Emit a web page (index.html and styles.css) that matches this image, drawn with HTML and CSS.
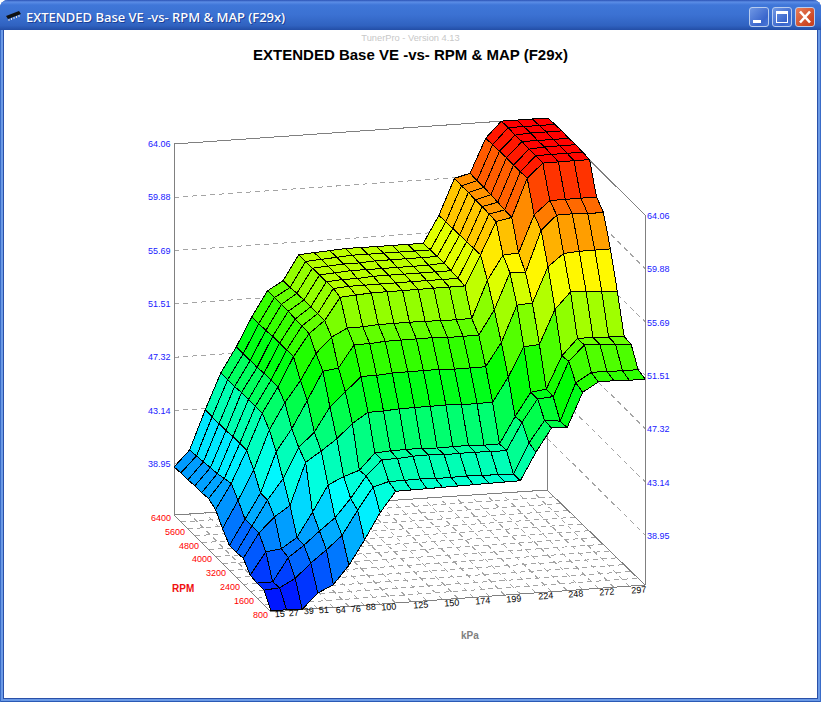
FILE: index.html
```html
<!DOCTYPE html>
<html lang="en">

<head>
    <meta charset="UTF-8">
    <title>EXTENDED Base VE -vs- RPM &amp; MAP (F29x)</title>
    <link rel="stylesheet" href="styles.css">
</head>

<body>
    <div class="window">
        <div class="titlebar">
            <svg class="app-icon" width="17" height="11" viewBox="0 0 17 11">
                <polygon points="1,5 14,0 16,3 3,8" fill="#111" />
                <path d="M4 8v2M6.500 7v2M9 6v2M11.500 5v2M14 4v2" stroke="#ddd" stroke-width="1" />
            </svg>
            <div class="window-title">EXTENDED Base VE -vs- RPM &amp; MAP (F29x)</div>
            <div class="window-buttons">
                <div class="win-btn">
                    <svg width="18" height="18" viewBox="0 0 18 18">
                        <rect x="3" y="12" width="8" height="3" fill="#fff" />
                    </svg>
                </div>
                <div class="win-btn">
                    <svg width="18" height="18" viewBox="0 0 18 18">
                        <rect x="3.500" y="3.500" width="11" height="11" fill="none" stroke="#fff" />
                        <rect x="3" y="3" width="12" height="3" fill="#fff" />
                    </svg>
                </div>
                <div class="win-btn close">
                    <svg width="18" height="18" viewBox="0 0 18 18">
                        <path d="M4 3.500L14 14.500M14 3.500L4 14.500" stroke="#fff" stroke-width="2.600" />
                    </svg>
                </div>
            </div>
        </div>

        <div class="client">
            <div class="version">TunerPro - Version 4.13</div>
            <h1 class="chart-title">EXTENDED Base VE -vs- RPM &amp; MAP (F29x)</h1>
            <svg id="chart" class="chart" viewBox="4 70 813 628"></svg>
        </div>
    </div>

    <script src="chart.js"></script>
</body>

</html>
```

FILE: styles.css
```css
html,
body {
    margin: 0;
    padding: 0;
    background-color: #fff;
}

.window {
    width: 821px;
    height: 702px;
    box-sizing: border-box;
    padding: 0 3px 3px;
    display: flex;
    flex-direction: column;
    background-color: #6b9ae6;
    border-radius: 8px 8px 0 0;
    box-shadow: inset 1px 0 #3a6cc8, inset -1px 0 #3a6cc8, inset 0 -1px #2a5ab5;
}

.titlebar {
    height: 30px;
    margin: 0 -3px;
    padding: 2px 6px 0 5px;
    box-sizing: border-box;
    display: flex;
    align-items: center;
    flex-shrink: 0;
    border-radius: 8px 8px 0 0;
    background: linear-gradient(180deg, #2a52b4 0, #5b8de6 2px, #3f76d8 5px, #3b71d2 50%, #3062c0 85%, #234ea6 100%);
}

.app-icon {
    margin-top: 1px;
    flex-shrink: 0;
}

.window-title {
    margin-left: 4px;
    margin-top: 1px;
    flex: 1;
    font-family: "Noto Sans", sans-serif;
    font-size: 13px;
    font-weight: 500;
    color: #fff;
    white-space: nowrap;
    text-shadow: 1px 1px #1c3f96;
}

.window-buttons {
    display: flex;
    gap: 3px;
    margin-top: 2px;
}

.win-btn {
    width: 20px;
    height: 20px;
    box-sizing: border-box;
    border: 1px solid #b8ccee;
    border-radius: 3px;
    background: linear-gradient(135deg, #6f97e4, #3a66cc 70%, #4a78d8);
}

.win-btn svg {
    display: block;
}

.win-btn.close {
    background: linear-gradient(135deg, #e8805c, #cf4a26 70%, #c63f1e);
}

.client {
    flex: 1;
    display: flex;
    flex-direction: column;
    background-color: #fff;
    border: 1px solid #2a50a8;
    border-top: none;
    margin: 0;
    min-height: 0;
    overflow: hidden;
}

.version {
    height: 13px;
    margin-top: 2px;
    text-align: center;
    font-family: "Liberation Sans", sans-serif;
    font-size: 9.300px;
    line-height: 13px;
    color: #c8c8c8;
}

.chart-title {
    height: 25px;
    margin: 0;
    text-align: center;
    font-family: "Liberation Sans", sans-serif;
    font-size: 15px;
    font-weight: bold;
    line-height: 20px;
    color: #000;
}

.chart {
    display: block;
    flex: 1;
    width: 813px;
    min-height: 0;
    margin-left: -1px;
}

.chart text {
    font-family: "Liberation Sans", sans-serif;
    font-size: 9px;
}

.chart .wall {
    stroke: #808080;
    stroke-width: 1;
    fill: none;
    shape-rendering: crispEdges;
}

.chart .grid {
    stroke: #a4a4a4;
    stroke-width: 1;
    stroke-dasharray: 5 4;
    fill: none;
    shape-rendering: crispEdges;
}

.chart .cell {
    stroke: #000;
    stroke-width: 1;
    stroke-linejoin: round;
    shape-rendering: crispEdges;
}

.chart .value-tick {
    fill: #2020ff;
}

.chart .rpm-tick {
    fill: #ff0000;
    text-anchor: end;
}

.chart .kpa-tick {
    fill: #000;
    text-anchor: middle;
}

.chart .axis-title {
    font-size: 10px;
    font-weight: bold;
}

.chart .rpm-title {
    fill: #f01010;
}

.chart .kpa-title {
    fill: #808080;
}
```

FILE: chart.js
```js
const SVG_NS = 'http://www.w3.org/2000/svg';
const chart = document.getElementById('chart');

// Surface height above the floor in pixels, one line per RPM row (800 to 6400, step 400)
const heights = [
    [1, 1, 0, 15, 22, 40, 64, 90, 110, 110, 110, 110, 110, 110, 110, 110, 110, 137, 160, 159, 193, 202, 202, 201, 201],
    [15, 16, 24, 38, 50, 63, 87, 109, 113, 113, 113, 112, 112, 112, 111, 111, 110, 140, 161, 159, 196, 205, 205, 204, 204],
    [15, 15, 38, 49, 62, 74, 92, 113, 128, 128, 129, 129, 128, 128, 128, 127, 127, 154, 176, 177, 211, 226, 225, 224, 223],
    [16, 38, 40, 50, 74, 100, 107, 112, 128, 129, 129, 129, 128, 128, 128, 127, 127, 153, 176, 178, 210, 226, 226, 225, 224],
    [26, 50, 65, 75, 117, 127, 138, 152, 162, 162, 163, 163, 163, 163, 162, 162, 162, 186, 215, 216, 250, 266, 265, 264, 263],
    [25, 50, 75, 95, 125, 139, 163, 177, 191, 191, 192, 192, 192, 192, 191, 191, 191, 214, 250, 251, 286, 298, 299, 299, 299],
    [25, 50, 75, 115, 137, 164, 192, 194, 216, 216, 217, 217, 217, 217, 216, 216, 216, 240, 276, 275, 316, 330, 330, 329, 329],
    [35, 62, 91, 130, 156, 177, 203, 218, 226, 226, 227, 227, 227, 227, 226, 226, 226, 263, 287, 288, 325, 338, 338, 338, 338],
    [47, 72, 104, 140, 165, 194, 216, 228, 250, 251, 252, 252, 252, 252, 252, 252, 252, 282, 314, 317, 355, 369, 369, 369, 369],
    [51, 70, 104, 140, 165, 194, 217, 228, 252, 253, 253, 253, 253, 253, 253, 253, 253, 282, 315, 318, 355, 370, 370, 370, 370],
    [50, 68, 104, 140, 165, 194, 217, 228, 252, 253, 253, 254, 254, 254, 254, 254, 254, 282, 316, 319, 355, 370, 371, 371, 371],
    [50, 67, 103, 140, 164, 194, 218, 228, 252, 253, 254, 254, 254, 254, 254, 254, 255, 282, 316, 320, 356, 371, 371, 371, 371],
    [49, 66, 103, 139, 164, 193, 218, 228, 252, 253, 254, 254, 255, 255, 255, 255, 255, 282, 317, 321, 356, 371, 372, 372, 372],
    [49, 65, 103, 139, 164, 193, 218, 227, 252, 253, 254, 255, 255, 255, 255, 255, 255, 282, 317, 321, 356, 372, 372, 372, 372],
    [48, 64, 103, 139, 164, 193, 218, 227, 252, 253, 254, 255, 255, 255, 255, 255, 255, 282, 318, 322, 356, 372, 372, 372, 372]
];

const COLS = heights[0].length - 1;
const ROWS = heights.length - 1;
const MAX_HEIGHT = 372;

const valueLabels = ['64.06', '59.88', '55.69', '51.51', '47.32', '43.14', '38.95'];

const rpmLabels = [
    ['6400', 172, 521], ['5600', 186, 535], ['4800', 200, 549], ['4000', 213, 562],
    ['3200', 227, 576], ['2400', 241, 590], ['1600', 255, 604], ['800', 269, 618]
];

const kpaLabels = [
    ['15', 281, 617], ['27', 295, 616], ['39', 310, 614], ['51', 325, 613],
    ['64', 342, 613], ['76', 357, 612], ['88', 372, 610], ['100', 390, 610],
    ['125', 422, 608], ['150', 453, 606], ['174', 484, 604], ['199', 515, 602],
    ['224', 547, 599], ['248', 577, 597], ['272', 608, 595], ['297', 640, 593]
];

function add(tag, attrs, text) {
    const el = document.createElementNS(SVG_NS, tag);
    Object.keys(attrs).forEach(name => el.setAttribute(name, attrs[name]));
    if (text) el.textContent = text;
    chart.appendChild(el);
    return el;
}

// u runs along kPa, v runs along RPM, both 0 to 1
function floorPoint(u, v) {
    return [272 + 374 * u - 97 * v, 612 - 32 * u - 97 * v + 7 * u * v];
}

// The drawn floor sits a little lower at its front right corner than the surface base
function gridPoint(u, v) {
    const p = floorPoint(u, v);
    return [p[0], p[1] + 5 * u * (1 - v)];
}

function line(a, b, cls) {
    add('line', { x1: a[0], y1: a[1], x2: b[0], y2: b[1], class: cls });
}

function drawWalls() {
    // Dashed height lines on the back and right walls
    for (let k = 1; k < valueLabels.length; k++) {
        const y = 144 + k * 53.33;
        line([175, y], [548, y - 26], 'grid');
        line([548, y - 26], [646, y + 71], 'grid');
    }

    // Dashed lines on the floor, one for each row and column of the table
    for (let r = 1; r < ROWS; r++) {
        line(gridPoint(0, r / ROWS), gridPoint(1, r / ROWS), 'grid');
    }
    for (let c = 1; c < COLS; c++) {
        line(gridPoint(c / COLS, 0), gridPoint(c / COLS, 1), 'grid');
    }

    add('polyline', { points: '175,515 175,144 548,118 646,215 646,585', class: 'wall' });
    add('polyline', { points: '175,515 272,612 646,585 548,490 175,515', class: 'wall' });
    line([548, 118], [548, 490], 'wall');
}

function drawSurface() {
    // Back rows first, the corner at 800 RPM and 15 kPa is nearest to the viewer
    for (let r = ROWS - 1; r >= 0; r--) {
        for (let c = COLS - 1; c >= 0; c--) {
            const corners = [[c, r], [c + 1, r], [c + 1, r + 1], [c, r + 1]];
            let total = 0;
            const points = corners.map(([i, j]) => {
                const p = floorPoint(i / COLS, j / ROWS);
                total += heights[j][i];
                return p[0].toFixed(1) + ',' + (p[1] - heights[j][i]).toFixed(1);
            });
            const hue = 240 * (1 - total / 4 / MAX_HEIGHT);
            add('polygon', { points: points.join(' '), fill: `hsl(${hue}, 100%, 50%)`, class: 'cell' });
        }
    }
}

function drawLabels() {
    valueLabels.forEach((label, k) => {
        const y = 144 + k * 53.33;
        add('text', { x: 149, y: y + 3, class: 'value-tick' }, label);
        add('text', { x: 648, y: y + 75, class: 'value-tick' }, label);
    });
    rpmLabels.forEach(([label, x, y]) => {
        add('text', { x: x, y: y, class: 'rpm-tick' }, label);
    });
    kpaLabels.forEach(([label, x, y]) => {
        add('text', { x: x, y: y, transform: `rotate(-4 ${x} ${y})`, class: 'kpa-tick' }, label);
    });
    add('text', { x: 173, y: 592, class: 'axis-title rpm-title' }, 'RPM');
    add('text', { x: 462, y: 639, class: 'axis-title kpa-title' }, 'kPa');
}

drawWalls();
drawSurface();
drawLabels();
```
